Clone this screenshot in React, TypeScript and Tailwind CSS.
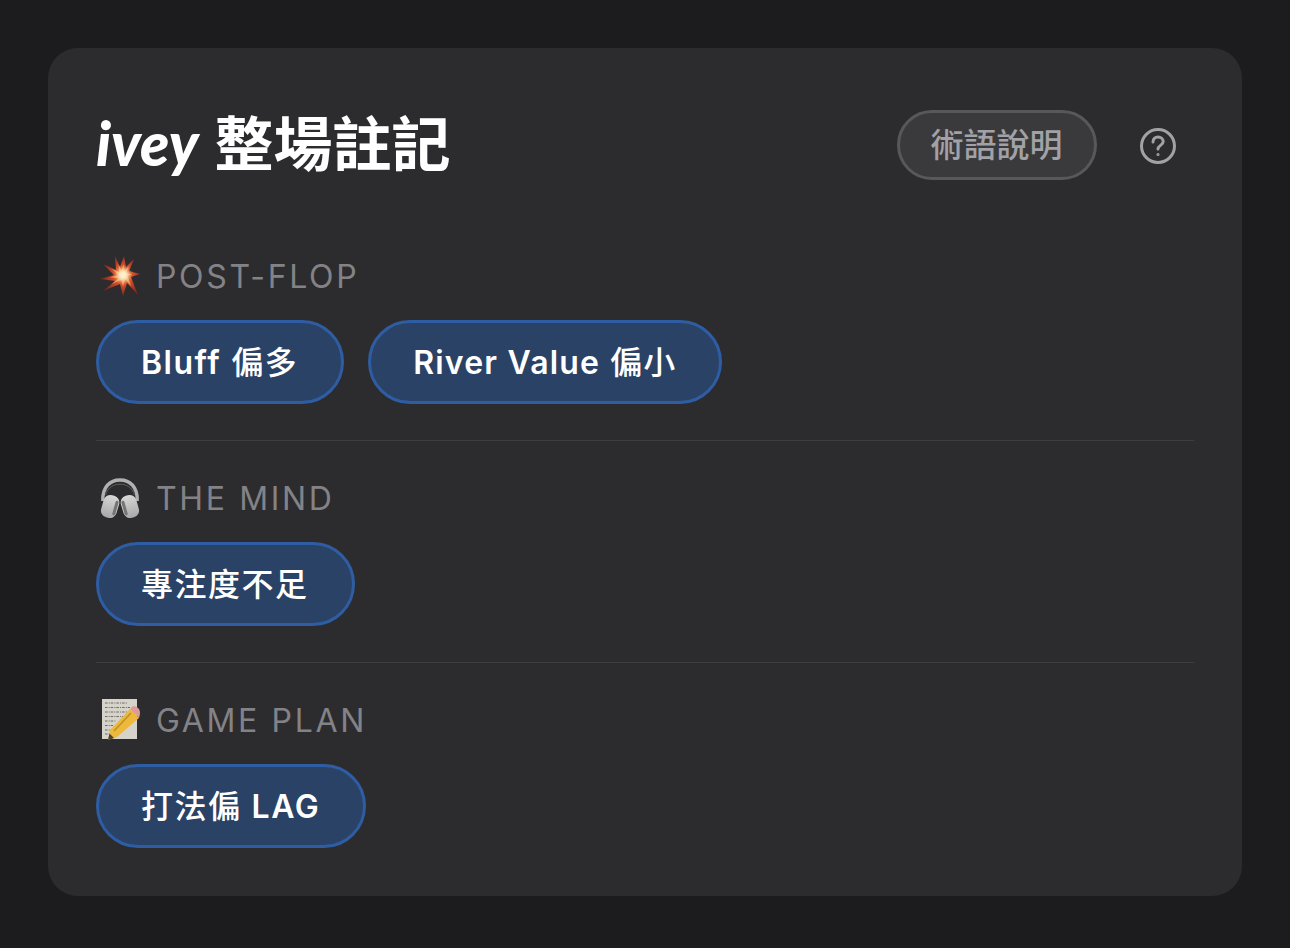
import React from "react";

const sans = "font-['Inter','Noto_Sans_CJK_TC',sans-serif]";

function Boom() {
  const pts = "15,0 20,11 24,0 26,11 34,3 29,15 40,18 31,21 38,39 27,27 23,40 20,28 3,35 15,25 0,23 14,19 3,8 16,14";
  return (
    <svg width="40" height="40" viewBox="0 0 40 40" className="overflow-visible">
      <defs>
        <filter id="soft" x="-10%" y="-10%" width="120%" height="120%">
          <feGaussianBlur stdDeviation="0.5" />
        </filter>
        <filter id="soft2" x="-60%" y="-60%" width="220%" height="220%">
          <feGaussianBlur stdDeviation="2" />
        </filter>
        <radialGradient id="b1" gradientUnits="userSpaceOnUse" cx="23" cy="19" r="21">
          <stop offset="0%" stopColor="#f08a48" />
          <stop offset="50%" stopColor="#cf4a2a" />
          <stop offset="100%" stopColor="#7a2a20" />
        </radialGradient>
      </defs>
      <g filter="url(#soft)">
        <polygon fill="url(#b1)" points={pts} />
        <polygon fill="#ee9a52" points={pts} transform="translate(23 19) scale(0.55) translate(-23 -19)" />
      </g>
      <circle cx="23" cy="19" r="6" fill="#fff4cf" filter="url(#soft2)" />
    </svg>
  );
}

function Phones() {
  return (
    <svg width="40" height="40" viewBox="0 0 40 40">
      <defs>
        <linearGradient id="p1" x1="0" y1="0" x2="0" y2="1">
          <stop offset="0%" stopColor="#d8d8d8" />
          <stop offset="100%" stopColor="#a8a8a8" />
        </linearGradient>
        <filter id="soft3" x="-10%" y="-10%" width="120%" height="120%">
          <feGaussianBlur stdDeviation="0.4" />
        </filter>
      </defs>
      <g filter="url(#soft3)">
        <path d="M2.8 23 C2.2 9 10 2 20 2 C30 2 37.8 9 37.2 23" fill="none" stroke="#b0b0b0" strokeWidth="3.4" />
        <path d="M5.5 17 C8 9 14 6.2 20 6.2 C26 6.2 32 9 34.5 17" fill="none" stroke="#5f5f5f" strokeWidth="1" />
        <g transform="rotate(16 10 29)">
          <rect x="2" y="17" width="16" height="23" rx="7" fill="url(#p1)" />
          <rect x="14" y="21" width="3" height="15" rx="1.5" fill="#747474" />
        </g>
        <g transform="rotate(-16 30 29)">
          <rect x="22" y="17" width="16" height="23" rx="7" fill="url(#p1)" />
          <rect x="23" y="21" width="3" height="15" rx="1.5" fill="#747474" />
        </g>
      </g>
    </svg>
  );
}

function Memo() {
  return (
    <svg width="40" height="44" viewBox="0 0 40 44">
      <defs>
        <filter id="soft4" x="-10%" y="-10%" width="120%" height="120%">
          <feGaussianBlur stdDeviation="0.35" />
        </filter>
      </defs>
      <g filter="url(#soft4)">
        <rect x="2" y="1" width="35" height="40" fill="#d6d3cb" />
        <g stroke="#5f5c57" strokeWidth="0.9" strokeDasharray="2.5 1.2 1 1" fill="none">
          <path d="M5 5H27M5 9.5H30M5 14H27M5 18.5H23M5 23H16M5 27.5H13M5 32H11M5 36H10" />
        </g>
      </g>
      <g filter="url(#soft4)">
        <path d="M30 11 L39 20 L17 39 L8 42 L10 32 Z" fill="#edb93a" />
        <path d="M31 15 L14 33" stroke="#c2912f" strokeWidth="1.8" />
        <path d="M30 11 L33 8 Q36 7.5 39 11 Q41 14.5 39 20 Z" fill="#dd9c9a" />
        <path d="M8 42 L9.5 35.5 L14 40 Z" fill="#4a4038" />
      </g>
    </svg>
  );
}

function Chip({ children, wide }: { children: React.ReactNode; wide?: boolean }) {
  return (
    <div
      className={`h-[84px] pt-[2px] flex items-center pl-[42px] pr-[43px] rounded-full border-[3px] border-[#2f5da3] bg-[#2a4266] text-white text-[32px] font-medium whitespace-pre ${
        wide ? "tracking-[1.2px]" : "tracking-[1.5px]"
      }`}
    >
      {children}
    </div>
  );
}

function Section({ icon, label, children, last }: { icon: React.ReactNode; label: string; children: React.ReactNode; last?: boolean }) {
  return (
    <div className={last ? "" : "pb-[36px] border-b border-[#3e3e41] mb-[37px]"}>
      <div className="h-[40px] flex items-center gap-[16px] pl-[4px] mb-[24px]">
        {icon}
        <span className="text-[32px] tracking-[2.65px] text-[#838387] pt-[2px]">{label}</span>
      </div>
      <div className="flex gap-[24px]">{children}</div>
    </div>
  );
}

const L = ({ children }: { children: string }) => <span className="font-semibold">{children}</span>;

export default function App() {
  return (
    <div className={`w-[1290px] h-[948px] bg-[#1c1c1e] p-[48px] ${sans}`}>
      <div className="h-[848px] w-[1194px] rounded-[30px] bg-[#2c2c2e] p-[48px]">
        <div className="flex items-center justify-between h-[70px] mt-[14px] mb-[76px]">
          <div className="flex items-center text-white font-bold">
            <span className="text-[60px] italic font-['Lato',sans-serif] font-black mr-[16px] leading-none -mt-[4px]">ivey</span>
            <span className="text-[59px] leading-none -mt-[2px]">整場註記</span>
          </div>
          <div className="flex items-center gap-[42px] mr-[17px]">
            <div className="h-[70px] w-[200px] pt-[2px] pr-[1px] flex items-center justify-center rounded-full border-[3px] border-[#58585b] bg-[#3a3a3c] text-[33px] font-medium text-[#a1a1a6]">
              術語說明
            </div>
            <svg className="mt-[2px]" width="38" height="38" viewBox="0 0 38 38" fill="none" stroke="#a1a1a6" strokeWidth="3" strokeLinecap="round">
              <circle cx="19" cy="19" r="16.5" />
              <path d="M14 15 C14 11.5 16.5 10 19 10 C22 10 24.2 12 24.2 14.6 C24.2 18.2 19 18.6 19 22" />
              <circle cx="19" cy="27.5" r="0.6" fill="#a1a1a6" strokeWidth="2" />
            </svg>
          </div>
        </div>
        <Section icon={<Boom />} label="POST-FLOP">
          <Chip><L>Bluff</L> 偏多</Chip>
          <Chip wide><L>River Value</L> 偏小</Chip>
        </Section>
        <Section icon={<Phones />} label="THE MIND">
          <Chip>專注度不足</Chip>
        </Section>
        <Section icon={<Memo />} label="GAME PLAN" last>
          <Chip>打法偏 <L>LAG</L></Chip>
        </Section>
      </div>
    </div>
  );
}
